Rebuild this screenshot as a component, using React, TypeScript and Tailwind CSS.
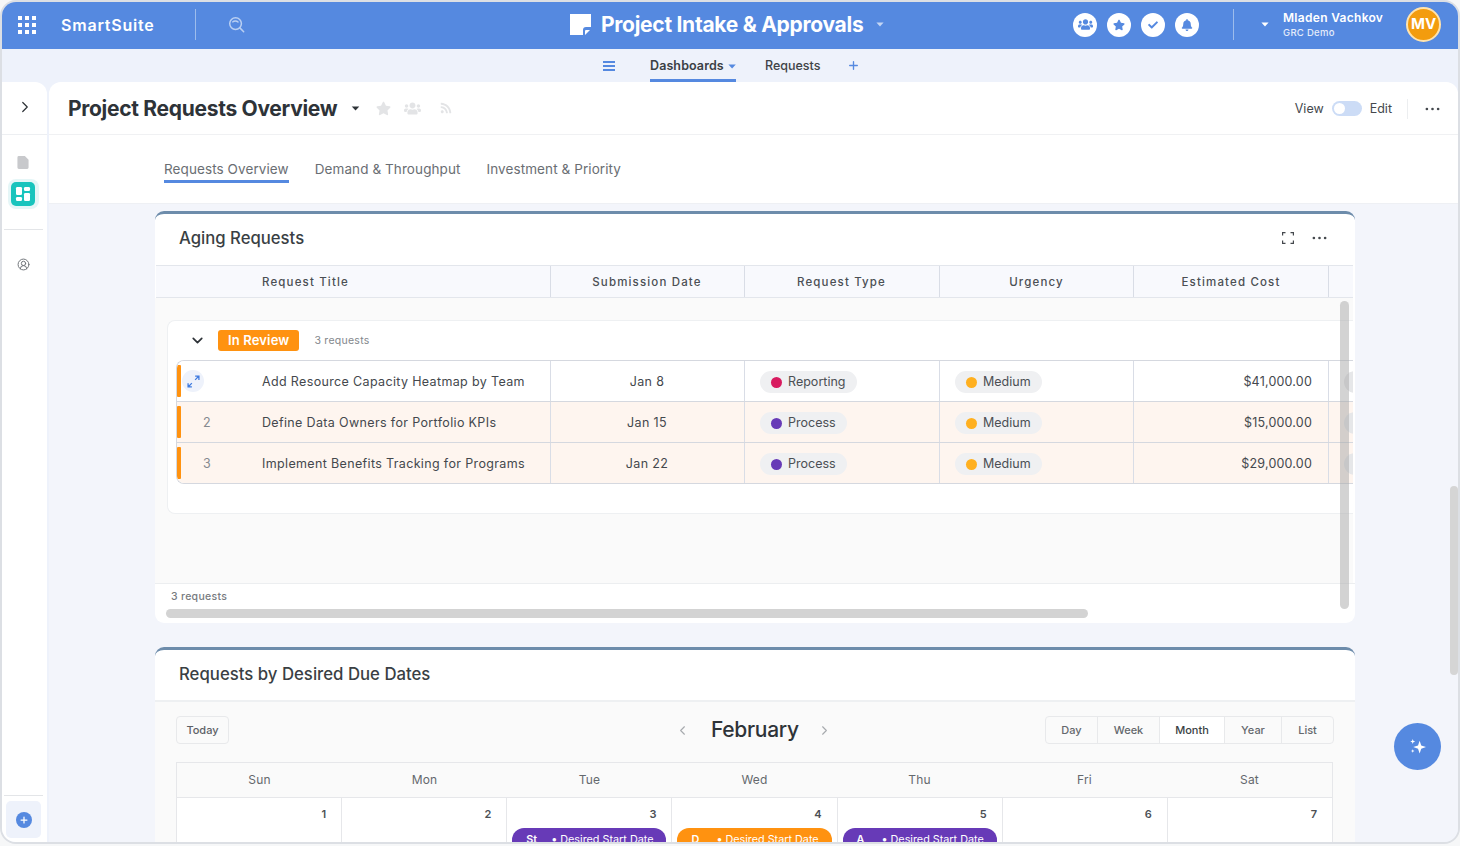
import { ChevronDown, ChevronLeft, ChevronRight, Plus, UserCircle2 } from 'lucide-react';
import { FaBell, FaCheck, FaRss, FaStar, FaUsers } from 'react-icons/fa';

const rows = [
  { num: '', title: 'Add Resource Capacity Heatmap by Team', date: 'Jan 8', type: 'Reporting', dot: 'bg-[#d81b60]', cost: '$41,000.00', bg: 'bg-white' },
  { num: '2', title: 'Define Data Owners for Portfolio KPIs', date: 'Jan 15', type: 'Process', dot: 'bg-[#673ab7]', cost: '$15,000.00', bg: 'bg-[#fef5ef]' },
  { num: '3', title: 'Implement Benefits Tracking for Programs', date: 'Jan 22', type: 'Process', dot: 'bg-[#673ab7]', cost: '$29,000.00', bg: 'bg-[#fef5ef]' },
];

const days = [
  { name: 'Sun', n: 1 },
  { name: 'Mon', n: 2 },
  { name: 'Tue', n: 3, label: 'St', color: 'bg-[#673ab7]' },
  { name: 'Wed', n: 4, label: 'D', color: 'bg-[#ff9210]' },
  { name: 'Thu', n: 5, label: 'A', color: 'bg-[#673ab7]' },
  { name: 'Fri', n: 6 },
  { name: 'Sat', n: 7 },
];

function Caret({ className }: { className: string }) {
  return (
    <svg viewBox="0 0 10 6" className={className} fill="currentColor">
      <path d="M0.5 0.5h9L5 5.5z" />
    </svg>
  );
}

function Dots({ className }: { className: string }) {
  return (
    <svg viewBox="0 0 16 4" className={className} fill="currentColor">
      <circle cx="2" cy="2" r="1.4" />
      <circle cx="8" cy="2" r="1.4" />
      <circle cx="14" cy="2" r="1.4" />
    </svg>
  );
}

function HeaderBadge({ children }: { children: React.ReactNode }) {
  return <div className="flex h-6 w-6 items-center justify-center rounded-full bg-white text-[#5589e0]">{children}</div>;
}

function TopBar() {
  return (
    <header className="flex h-[47px] shrink-0 items-center bg-[#5589e0] pb-[2px] text-white">
      <div className="ml-[16px] grid grid-cols-3 gap-[3px]">
        {Array.from({ length: 9 }).map((_, i) => (
          <span key={i} className="h-[4px] w-[4px] bg-white" />
        ))}
      </div>
      <span className="ml-[25px] w-[100px] text-[16px] font-semibold tracking-[0.8px]">SmartSuite</span>
      <div className="ml-[34px] h-[31px] w-px bg-[#9dbcec]" />
      <svg viewBox="0 0 18 18" className="ml-[32px] h-[17px] w-[17px]" fill="none" stroke="#b9cff2" strokeWidth="1.6" strokeLinecap="round">
        <circle cx="8" cy="8" r="6.2" />
        <path d="M12.6 12.6L16.6 16.6" />
        <path d="M5.2 6.2C6.4 4.8 9 4.8 10.6 6.4" />
      </svg>
      <div className="ml-[325px] flex w-[330px] items-center">
        <svg viewBox="0 0 21 21" className="h-[21px] w-[21px]" fill="white">
          <path d="M0 0h21v13h-5a3 3 0 0 0-3 3v5H0z" />
          <path d="M15 21v-4a1 1 0 0 1 1-1h4z" />
        </svg>
        <span className="ml-[10px] text-[21px] font-bold tracking-[-0.28px] whitespace-nowrap">Project Intake &amp; Approvals</span>
        <Caret className="ml-[13px] h-[5px] w-[8px] text-[#c4d6f4]" />
      </div>
      <div className="ml-[173px] flex gap-[10px]">
        <HeaderBadge><FaUsers size={15} /></HeaderBadge>
        <HeaderBadge><FaStar size={12} /></HeaderBadge>
        <HeaderBadge><FaCheck size={10} /></HeaderBadge>
        <HeaderBadge><FaBell size={12} /></HeaderBadge>
      </div>
      <div className="ml-[34px] h-[31px] w-px bg-[#9dbcec]" />
      <Caret className="ml-[27px] h-[5px] w-[8px] text-white" />
      <div className="ml-[14px] flex w-[123px] flex-col">
        <span className="text-[12px] leading-[16px] font-semibold tracking-[0.3px] whitespace-nowrap">Mladen Vachkov</span>
        <span className="text-[9.5px] leading-[14px] font-medium tracking-[0.3px] text-[#e4ecfa]">GRC Demo</span>
      </div>
      <div className="flex h-[35px] w-[35px] items-center justify-center rounded-full border-2 border-[#ffe3ad] bg-[#f39c0e] text-[15px] font-bold">MV</div>
    </header>
  );
}

function SubNav() {
  return (
    <nav className="flex h-[33px] shrink-0 items-stretch bg-[#eef2fb] pl-[601px] text-[12.5px] font-medium">
      <div className="flex w-[47px] items-center">
        <div className="flex w-[12px] flex-col gap-[2px]">
          <span className="h-[2px] bg-[#5589e0]" />
          <span className="h-[2px] bg-[#5589e0]" />
          <span className="h-[2px] bg-[#5589e0]" />
        </div>
      </div>
      <div className="flex w-[86px] items-center justify-center gap-[4px] border-b-[3px] border-[#5589e0] pt-[5px] font-semibold tracking-[0.1px] text-[#3b3f45]">
        Dashboards
        <Caret className="h-[5px] w-[9px] text-[#5589e0]" />
      </div>
      <div className="ml-[29px] flex items-center pt-[1px] text-[#3f4347]">Requests</div>
      <div className="ml-[27px] flex items-center">
        <Plus size={13} strokeWidth={2.5} className="text-[#5589e0]" />
      </div>
    </nav>
  );
}

function SideRail() {
  return (
    <aside className="flex w-[45px] shrink-0 flex-col rounded-tr-[12px] bg-white">
      <div className="flex h-[53px] shrink-0 items-center justify-center border-b border-[#edeff2] pb-[2px]">
        <ChevronRight size={18} strokeWidth={1.6} className="text-[#2c3136]" />
      </div>
      <div className="flex flex-col items-center pt-[21px] pr-[3px]">
        <svg viewBox="0 0 12 14" className="h-[13px] w-[12px]" fill="#c8c9cc">
          <path d="M1.5 0H8l4 4v8.5a1.5 1.5 0 0 1-1.5 1.5h-9A1.5 1.5 0 0 1 0 12.5v-11A1.5 1.5 0 0 1 1.5 0z" />
        </svg>
        <div className="mt-[10px] flex h-[30px] w-[31px] items-center justify-center rounded-[8px] bg-[#e5f6f7]">
          <svg viewBox="0 0 24 24" className="h-[24px] w-[24px]">
            <rect width="24" height="24" rx="5" fill="#19c4bd" />
            <rect x="5" y="5" width="6" height="8" rx="1.2" fill="white" />
            <rect x="13" y="5" width="6" height="4" rx="1.2" fill="white" />
            <rect x="13" y="11" width="6" height="8" rx="1.2" fill="white" />
            <rect x="5" y="15" width="6" height="4" rx="1.2" fill="white" />
          </svg>
        </div>
      </div>
      <div className="mr-[4px] ml-[2px] mt-[20px] h-px bg-[#e3e5e8]" />
      <div className="flex justify-center pt-[28px] pr-[3px]">
        <UserCircle2 size={13} strokeWidth={1.8} className="text-[#6f7378]" />
      </div>
      <div className="mt-auto mr-[4px] ml-[2px] border-t border-[#e3e5e8] pt-[5px] pr-[2px] pb-[4px] pl-[2px]">
        <div className="flex h-[37px] items-center justify-center rounded-[5px] bg-[#eef2fb]">
          <div className="flex h-[16px] w-[16px] items-center justify-center rounded-full bg-[#5589e0]">
            <Plus size={10} strokeWidth={3} className="text-white" />
          </div>
        </div>
      </div>
    </aside>
  );
}

function TitleBar() {
  return (
    <div className="flex h-[53px] shrink-0 items-center border-b border-[#f0f1f3] bg-white pl-[19px]">
      <h1 className="mt-[2px] w-[270px] text-[21px] font-bold tracking-[-0.3px] whitespace-nowrap text-[#2e3338]">Project Requests Overview</h1>
      <Caret className="ml-[13px] h-[5px] w-[9px] text-[#2e3338]" />
      <FaStar size={15} className="ml-[16px] text-[#e3e4e6]" />
      <FaUsers size={17} className="ml-[13px] text-[#e3e4e6]" />
      <FaRss size={12} className="ml-[19px] text-[#e3e4e6]" />
      <div className="ml-auto flex items-center pt-[1px] text-[12.5px] text-[#44484d]">
        <span className="ml-[1px] pt-[1px]">View</span>
        <div className="ml-[8px] flex h-[15px] w-[30px] items-center rounded-full bg-[#ccdcf6] pl-[2px]">
          <span className="h-[11px] w-[11px] rounded-full bg-white" />
        </div>
        <span className="ml-[8px] pt-[1px]">Edit</span>
        <div className="ml-[15px] h-[20px] w-px bg-[#eceef0]" />
        <Dots className="ml-[17px] mr-[18px] h-[4px] w-[15px] text-[#44484d]" />
      </div>
    </div>
  );
}

function Tabs() {
  return (
    <div className="flex h-[69px] shrink-0 items-start gap-[26px] border-b border-[#eef0f4] bg-white pt-[26px] pl-[115px] text-[13.5px] tracking-[0.09px] text-[#6a6e73]">
      <div className="border-b-[3px] border-[#5589e0] pb-[2px] leading-[17px] whitespace-nowrap">Requests Overview</div>
      <div className="leading-[17px] whitespace-nowrap">Demand &amp; Throughput</div>
      <div className="leading-[17px] whitespace-nowrap">Investment &amp; Priority</div>
    </div>
  );
}

function HeadCell({ className, children }: { className: string; children: React.ReactNode }) {
  return (
    <div className={`flex shrink-0 items-center border-r border-[#d9dde6] pt-[3px] text-[11.5px] font-medium tracking-[1.15px] text-[#4b4f54] ${className}`}>
      {children}
    </div>
  );
}

function Pill({ dot, label }: { dot: string; label: string }) {
  return (
    <span className="inline-flex h-[22px] items-center gap-[6px] rounded-full bg-[#eff0f2] px-[11px] text-[12.5px] tracking-[0.02px] text-[#4b4f54]">
      <span className={`h-[11px] w-[11px] rounded-full ${dot}`} />
      {label}
    </span>
  );
}

function AgingCard() {
  return (
    <section className="relative h-[412px] shrink-0 overflow-hidden rounded-[9px] border-t-[3px] border-[#6d8cab] bg-white">
      <div className="flex h-[51px] items-center pr-[28px] pb-[2px] pl-[24px]">
        <h2 className="text-[16.7px] font-medium text-[#3a3f44]">Aging Requests</h2>
        <svg viewBox="0 0 12 12" className="mb-[2px] ml-auto h-[12px] w-[12px]" fill="none" stroke="#44484d" strokeWidth="1.2">
          <path d="M0.6 3.5V0.6H3.5M8.5 0.6h2.9v2.9M11.4 8.5v2.9H8.5M3.5 11.4H0.6V8.5" />
        </svg>
        <Dots className="mb-[2px] ml-[18px] h-[4px] w-[15px] text-[#44484d]" />
      </div>
      <div className="mr-[2px] ml-[1px] flex h-[33px] border-y border-[#e3e6ec] bg-[#f8f9fd]">
        <HeadCell className="w-[395px] pl-[106px]">Request Title</HeadCell>
        <HeadCell className="w-[194px] justify-center pr-[1px]">Submission Date</HeadCell>
        <HeadCell className="w-[195px] justify-center pr-[1px]">Request Type</HeadCell>
        <HeadCell className="w-[194px] justify-center">Urgency</HeadCell>
        <HeadCell className="w-[195px] justify-center">Estimated Cost</HeadCell>
      </div>
      <div className="mr-[2px] h-[285px] bg-[#fafafa] pt-[22px] pl-[12px]">
        <div className="h-[194px] rounded-l-[8px] border border-r-0 border-[#eef0f2] bg-white pl-[8px]">
          <div className="flex h-[39px] items-center">
            <ChevronDown size={17} strokeWidth={2.4} className="ml-[13px] text-[#2e3338]" />
            <span className="ml-[12px] flex h-[21px] items-center rounded-[3px] bg-[#ff9210] px-[10px] text-[13px] font-semibold tracking-[0.15px] text-white">In Review</span>
            <span className="ml-[15px] text-[10.5px] tracking-[0.27px] text-[#83878c]">3 requests</span>
          </div>
          <div className="overflow-hidden rounded-l-[8px] border-y border-l border-[#d5d8df]">
            {rows.map((row, i) => (
              <div key={row.title} className={`relative flex pt-[2px] text-[12.5px] tracking-[0.35px] text-[#44484d] ${row.bg} ${i > 0 ? 'h-[41px] border-t border-[#d5d8df]' : 'h-[40px]'}`}>
                <span className="absolute top-[4px] left-0 h-[32px] w-[4px] rounded-[1px] bg-[#ff9210]" />
                {!row.num && (
                  <span className="absolute top-[9px] left-[5px] flex h-[22px] w-[22px] items-center justify-center rounded-full bg-[#eef2fb]">
                    <svg viewBox="0 0 12 12" className="h-[13px] w-[13px]" fill="none" stroke="#3f7be0" strokeWidth="1.2">
                      <path d="M1 11l3.5-3.5M11 1L7.5 4.5M7.5 1H11v3.5M1 7.5V11h3.5" />
                    </svg>
                  </span>
                )}
                <div className="-mt-[2px] flex w-[374px] shrink-0 items-center border-r border-[#d9dde6] pt-[2px]">
                  <div className="flex w-[85px] justify-center pr-[25px] text-[#85898e]">{row.num}</div>
                  <span className="whitespace-nowrap">{row.title}</span>
                </div>
                <div className="-mt-[2px] flex w-[194px] shrink-0 items-center justify-center border-r border-[#d9dde6] pt-[2px] pr-[1px]">{row.date}</div>
                <div className="-mt-[2px] flex w-[195px] shrink-0 items-center border-r border-[#d9dde6] pt-[2px] pl-[15px]">
                  <Pill dot={row.dot} label={row.type} />
                </div>
                <div className="-mt-[2px] flex w-[194px] shrink-0 items-center border-r border-[#d9dde6] pt-[2px] pl-[15px]">
                  <Pill dot="bg-[#ffb020]" label="Medium" />
                </div>
                <div className="-mt-[2px] flex w-[195px] shrink-0 items-center justify-end border-r border-[#d9dde6] pt-[2px] pr-[16px] tracking-[0.2px]">{row.cost}</div>
                <div className="flex items-center pl-[15px]">
                  <span className="h-[22px] w-[12px] rounded-l-full bg-[#e6e7e9]" />
                </div>
              </div>
            ))}
          </div>
        </div>
      </div>
      <div className="border-t border-[#eceef0] pt-[5px] pl-[16px] text-[10.5px] font-medium tracking-[0.3px] text-[#777b80]">3 requests</div>
      <span className="absolute top-[395px] left-[11px] h-[9px] w-[922px] rounded-full bg-[#d3d3d3]" />
      <span className="absolute top-[87px] right-[6px] h-[308px] w-[9px] rounded-full bg-[#a8a8a8]/50" />
    </section>
  );
}

function CalendarCard() {
  return (
    <section className="mt-[24px] flex-1 overflow-hidden rounded-t-[9px] border-t-[3px] border-[#6d8cab] bg-white">
      <div className="flex h-[52px] items-center border-b-2 border-[#eef0f2] pl-[24px]">
        <h2 className="text-[16.75px] font-medium text-[#3a3f44]">Requests by Desired Due Dates</h2>
      </div>
      <div className="h-full bg-[#fafafa] pt-[14px] pr-[22px] pl-[21px]">
        <div className="flex h-[28px] items-center">
          <button className="h-[28px] w-[53px] rounded-[4px] border border-[#e8e9eb] text-[11px] font-medium text-[#5d6166]">Today</button>
          <div className="ml-[446px] flex items-center">
            <ChevronLeft size={15} strokeWidth={1.8} className="text-[#a8abaf]" />
            <span className="ml-[21px] w-[88px] text-[21px] font-medium tracking-[-0.3px] text-[#2e3338]">February</span>
            <ChevronRight size={15} strokeWidth={1.8} className="ml-[18px] text-[#a8abaf]" />
          </div>
          <div className="-mr-[1px] ml-auto flex h-[28px] overflow-hidden rounded-[4px] border border-[#e8e9eb] text-[11px] font-medium text-[#64686d]">
            <span className="flex w-[52px] items-center justify-center border-r border-[#e8e9eb]">Day</span>
            <span className="flex w-[62px] items-center justify-center border-r border-[#e8e9eb]">Week</span>
            <span className="flex w-[65px] items-center justify-center border-r border-[#e8e9eb] bg-white text-[#3a3f44]">Month</span>
            <span className="flex w-[57px] items-center justify-center border-r border-[#e8e9eb]">Year</span>
            <span className="flex w-[51px] items-center justify-center">List</span>
          </div>
        </div>
        <div className="mt-[18px] border-t border-l border-[#e6e7ea]">
          <div className="grid h-[35px] grid-cols-7 border-r border-b border-[#e6e7ea]">
            {days.map((d) => (
              <div key={d.name} className="flex items-center justify-center text-[12px] tracking-[0.2px] text-[#64686d]">{d.name}</div>
            ))}
          </div>
          <div className="grid h-[60px] grid-cols-7">
            {days.map((d) => (
              <div key={d.name} className="border-r border-[#e6e7ea] bg-white px-[5px] pt-[8px]">
                <div className="pr-[10px] text-right text-[11px] font-semibold text-[#4b4f54]">{d.n}</div>
                {d.label && (
                  <div className={`mt-[5px] flex h-[24px] items-start rounded-t-[12px] pt-[4px] pl-[14px] text-[10.8px] whitespace-nowrap text-white ${d.color}`}>
                    <span className="w-[25px] font-semibold">{d.label}</span>
                    <span className="w-[9px]">•</span>
                    <span>Desired Start Date</span>
                  </div>
                )}
              </div>
            ))}
          </div>
        </div>
      </div>
    </section>
  );
}

export default function App() {
  return (
    <div className="h-[846px] w-[1460px] bg-[#f6f7f8] font-['Inter','Liberation_Sans',sans-serif]">
      <div className="relative flex h-[844px] w-[1460px] flex-col overflow-hidden rounded-[16px] border-2 border-[#dcdfe4] bg-[#eef2fb]">
        <TopBar />
        <SubNav />
        <div className="flex min-h-0 flex-1 gap-[2px]">
          <SideRail />
          <main className="flex min-w-0 flex-1 flex-col overflow-hidden rounded-t-[12px] bg-[#f3f5fb]">
            <TitleBar />
            <Tabs />
            <div className="flex min-h-0 flex-1 flex-col pt-[7px] pr-[103px] pl-[106px]">
              <AgingCard />
              <CalendarCard />
            </div>
          </main>
        </div>
        <span className="absolute top-[484px] right-0 h-[189px] w-[8px] rounded-full bg-[#d5d5d5]" />
        <button className="absolute top-[721px] right-[17px] flex h-[47px] w-[47px] items-center justify-center rounded-full bg-[#5589e0]">
          <svg viewBox="0 0 16 16" className="h-[17px] w-[17px]" fill="white">
            <path d="M10 2.5l1.5 4.5 4.5 1.5-4.5 1.5-1.5 4.5-1.5-4.5-4.5-1.5 4.5-1.5z" />
            <path d="M3.5 1l.6 1.7 1.7.6-1.7.6-.6 1.7-.6-1.7-1.7-.6 1.7-.6z" />
            <path d="M3.5 10.5l.5 1.2 1.2.5-1.2.5-.5 1.2-.5-1.2-1.2-.5 1.2-.5z" />
          </svg>
        </button>
      </div>
    </div>
  );
}
